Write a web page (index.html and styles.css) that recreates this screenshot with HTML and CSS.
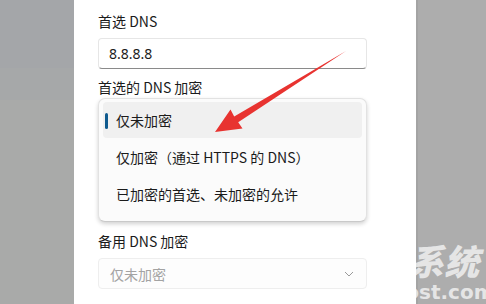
FILE: index.html
```html
<!DOCTYPE html>
<html lang="zh-CN">
<head>
<meta charset="utf-8">
<link rel="stylesheet" href="styles.css">
</head>
<body>
<div class="screen">
  <div class="side side-left">
    <div class="band band-a"></div>
    <div class="band band-b"></div>
    <div class="band band-c"></div>
  </div>
  <div class="panel">
    <div class="label l1">首选 DNS</div>
    <div class="textbox">8.8.8.8</div>
    <div class="label l2">首选的 DNS 加密</div>
    <div class="popup">
      <div class="item selected"><span class="indicator"></span>仅未加密</div>
      <div class="item">仅加密（通过 HTTPS 的 DNS）</div>
      <div class="item">已加密的首选、未加密的允许</div>
    </div>
    <div class="label l3">备用 DNS 加密</div>
    <div class="combo">
      <span>仅未加密</span>
      <svg class="chev" width="10" height="6" viewBox="0 0 10 6"><path d="M1 1 L5 5 L9 1" fill="none" stroke="#9a9a9a" stroke-width="1"/></svg>
    </div>
  </div>
  <div class="side side-right"></div>
  <svg class="arrow" width="486" height="304" viewBox="0 0 486 304">
    <polygon points="346,51 234.2,116.5 230.5,109.5 215,132 242.5,128.6 238.2,122.2" fill="#e83330"/>
  </svg>
  <div class="watermark">
    <div class="wm-cn">地系统</div>
    <div class="wm-en">host.com</div>
  </div>
</div>
</body>
</html>
```
FILE: styles.css
```css
html, body {
  margin: 0;
  padding: 0;
}
body {
  width: 486px;
  height: 304px;
  overflow: hidden;
  font-family: "Noto Sans CJK SC", "Noto Sans", sans-serif;
  color: #1b1b1b;
}
.screen {
  position: relative;
  display: flex;
  width: 486px;
  height: 304px;
  overflow: hidden;
}
.side-left {
  width: 74px;
  display: flex;
  flex-direction: column;
  background: #a8aaaa;
}
.band-a { height: 68px; background: #a4a6a9; }
.band-b { height: 32px; background: #a6a8a9; }
.band-c { flex: 1; background: #a9aaa9; }
.side-right {
  flex: 1;
  background: #adadad;
  border-left: 2px solid #a4a4a4;
}
.panel {
  width: 294px;
  padding: 0 24px;
  background: #ffffff;
  display: flex;
  flex-direction: column;
}
.label {
  font-size: 14px;
  line-height: 20px;
  height: 20px;
}
.l1 { margin-top: 11px; }
.l2 { margin-top: 8px; }
.l3 { margin-top: 9px; }
.textbox {
  margin-top: 7px;
  width: 269px;
  height: 31px;
  box-sizing: border-box;
  border: 1px solid #e6e6e6;
  border-bottom: 1px solid #8a8a8a;
  border-radius: 4px;
  padding-left: 10px;
  font-size: 14px;
  line-height: 29px;
  font-family: "Noto Sans", sans-serif;
  color: #1b1b1b;
}
.popup {
  margin-top: 1px;
  width: 269px;
  height: 124px;
  box-sizing: border-box;
  border: 1px solid #e2e2e2;
  border-bottom-color: #c9c9c9;
  border-radius: 7px;
  background: #fbfbfb;
  box-shadow: 0 2px 4px rgba(0,0,0,0.18);
  padding: 3px 4px;
  display: flex;
  flex-direction: column;
  gap: 1px;
}
.item {
  position: relative;
  height: 36px;
  line-height: 36px;
  padding-left: 13px;
  font-size: 14px;
  border-radius: 4px;
  color: #1b1b1b;
}
.item.selected {
  background: #f0f0f0;
}
.indicator {
  position: absolute;
  left: 2px;
  top: 11px;
  width: 3px;
  height: 16px;
  border-radius: 2px;
  background: #0f5a8e;
}
.combo {
  margin-top: 7px;
  width: 269px;
  height: 31px;
  box-sizing: border-box;
  border: 1px solid #eeeeee;
  border-radius: 4px;
  padding: 0 12px 0 11px;
  display: flex;
  align-items: center;
  justify-content: space-between;
  font-size: 14px;
  color: #a3a3a3;
  background: #fdfdfd;
}
.chev { margin-top: 1px; }
.arrow {
  position: absolute;
  left: 0;
  top: 0;
}
.watermark {
  position: absolute;
  left: 374px;
  top: 238px;
  color: rgba(255,255,255,0.7);
  font-family: "Noto Sans CJK SC", sans-serif;
  font-weight: 900;
}
.wm-cn {
  font-size: 35px;
  line-height: 44px;
  height: 44px;
  font-style: italic;
  white-space: nowrap;
}
.wm-en {
  font-family: "DejaVu Sans", sans-serif;
  font-weight: bold;
  font-size: 20px;
  line-height: 20px;
  margin-left: 17px;
  white-space: nowrap;
}
```
